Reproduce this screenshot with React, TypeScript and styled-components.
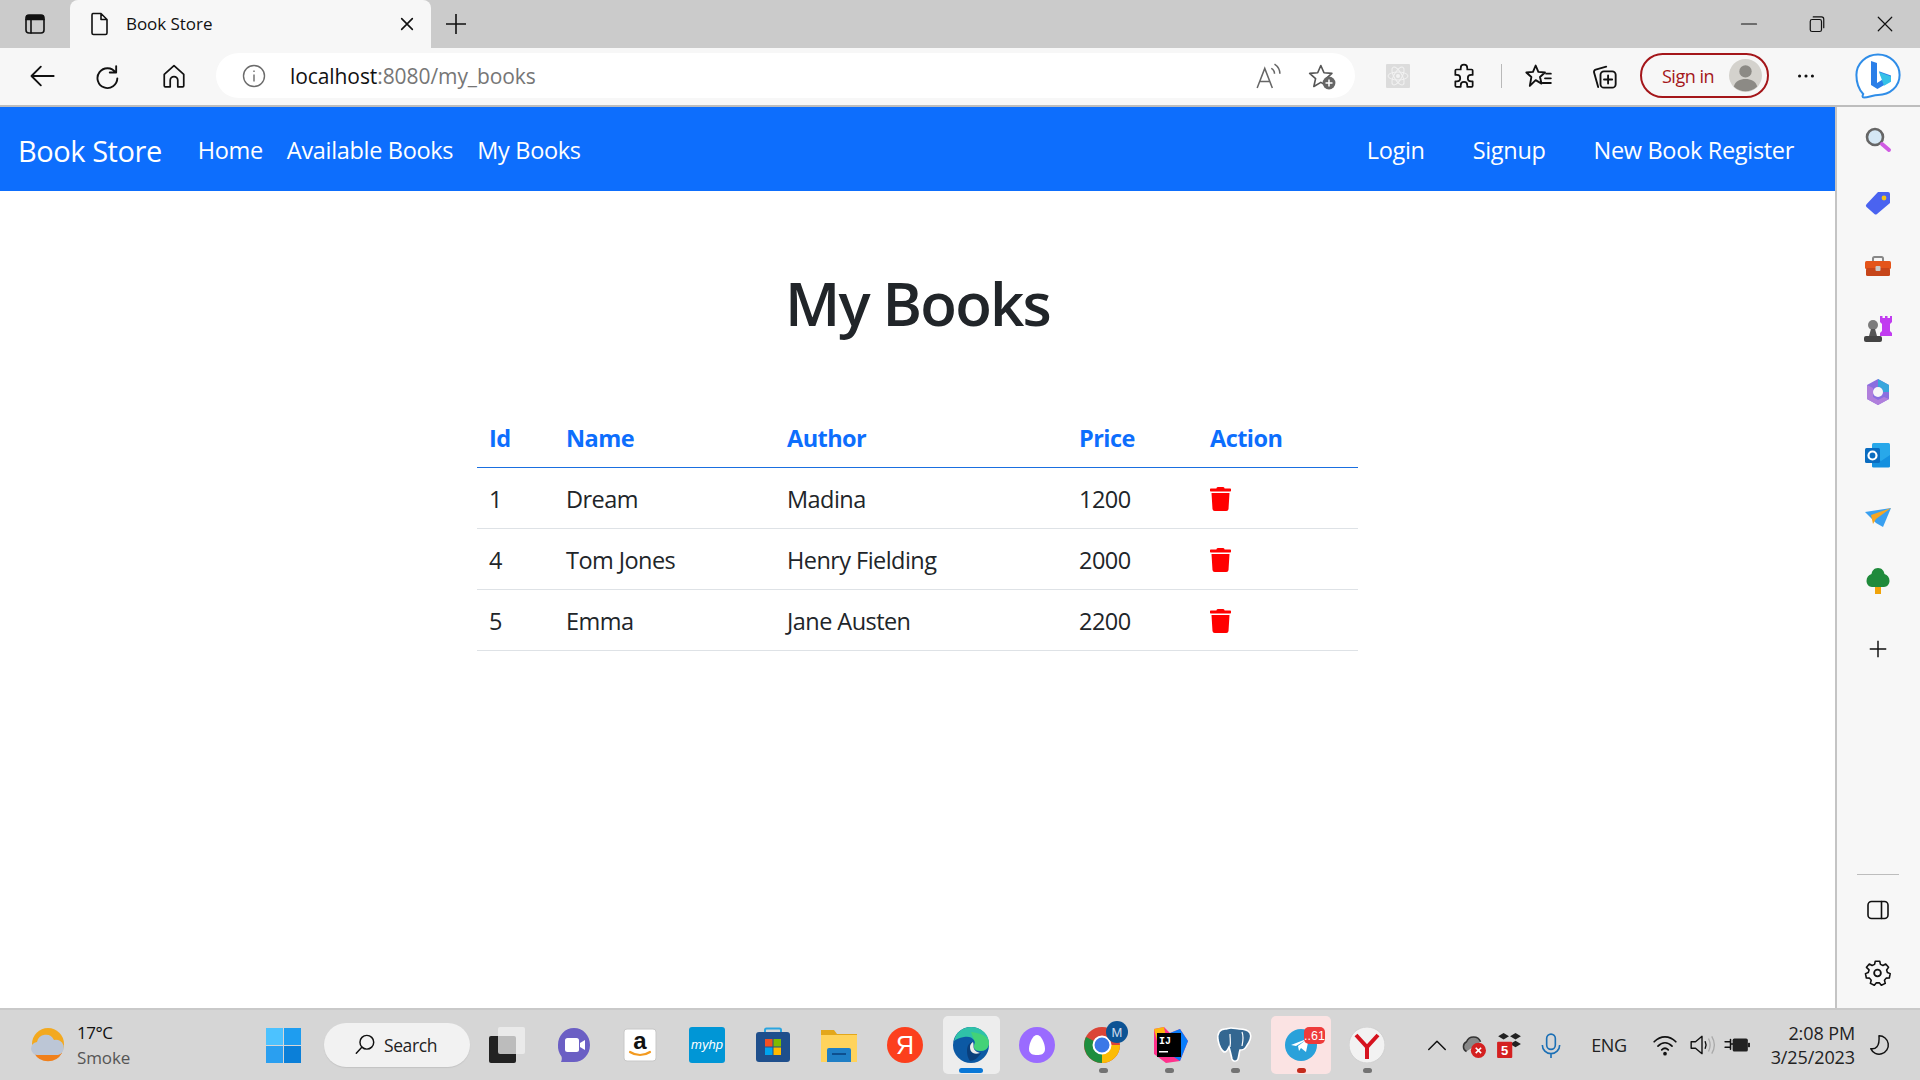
import React from 'react';
import styled, { createGlobalStyle } from 'styled-components';
import { FaTrash } from 'react-icons/fa';

const SANS = `'Open Sans', 'Noto Sans', 'Liberation Sans', sans-serif`;

const GlobalStyle = createGlobalStyle`
  html, body {
    margin: 0;
    padding: 0;
    background: #fff;
  }
  body {
    font-family: ${SANS};
    color: #212529;
    overflow: hidden;
  }
  * {
    box-sizing: border-box;
  }
`;

const Screen = styled.div`
  width: 1920px;
  height: 1080px;
  display: flex;
  flex-direction: column;
  overflow: hidden;
`;

/* tab strip */
const TabStrip = styled.div`
  height: 48px;
  padding-right: 1px;
  display: flex;
  align-items: stretch;
  background: #cbcbcb;
`;
const Slot = styled.div<{ $w: number }>`
  width: ${p => p.$w}px;
  flex: none;
  display: flex;
  align-items: center;
  justify-content: center;
`;
const Tab = styled.div`
  width: 361px;
  display: flex;
  align-items: center;
  padding-left: 20px;
  border-radius: 8px 8px 0 0;
  background: #f7f7f7;
`;
const TabTitle = styled.span`
  margin-left: 16px;
  padding-bottom: 2px;
  flex: 1;
  font-size: 17px;
  letter-spacing: -0.05px;
  color: #111;
`;
const TabClose = styled.div`
  width: 48px;
  display: flex;
  justify-content: center;
`;
const Spacer = styled.div`
  flex: 1;
`;

/* toolbar */
const Toolbar = styled.div`
  height: 59px;
  padding: 6px 0 8px 9px;
  display: flex;
  align-items: center;
  background: #f7f7f7;
  border-bottom: 2px solid #bdbdbd;
`;
const AddressBar = styled.div`
  width: 1139px;
  height: 45px;
  margin: 0 10px 0 9px;
  padding: 0 19px 0 26px;
  display: flex;
  align-items: center;
  flex: none;
  border-radius: 23px;
  background: #fff;
`;
const Url = styled.div`
  margin-left: 24px;
  flex: 1;
  font-size: 21px;
  letter-spacing: -0.08px;
  color: #767676;
  b {
    font-weight: 400;
    color: #111;
  }
`;
const AddressIcons = styled.div`
  display: flex;
  align-items: center;
  gap: 27px;
`;
const Separator = styled.div`
  width: 1px;
  height: 24px;
  margin: 0 3px 0 4px;
  background: #b9b9b9;
`;
const SignIn = styled.div`
  width: 129px;
  height: 45px;
  margin-left: 3px;
  padding: 0 5px 0 20px;
  display: flex;
  align-items: center;
  justify-content: space-between;
  flex: none;
  border: 2px solid #a4161a;
  border-radius: 23px;
  font-size: 18px;
  letter-spacing: -0.5px;
  color: #a4161a;
`;

/* page + sidebar */
const Body = styled.div`
  flex: 1;
  min-height: 0;
  display: flex;
`;
const Page = styled.div`
  flex: 1;
  min-width: 0;
  background: #fff;
`;
const Navbar = styled.nav`
  height: 84px;
  padding: 2px 34px 0 18px;
  display: flex;
  align-items: center;
  background: #0d6efd;
  color: #fff;
`;
const Brand = styled.a`
  margin-right: 36px;
  font-size: 29px;
  letter-spacing: -0.45px;
`;
const NavLink = styled.a<{ $gap: number }>`
  margin-right: ${p => p.$gap}px;
  font-size: 23.5px;
  letter-spacing: -0.32px;
  white-space: nowrap;
`;
const Content = styled.main`
  padding-top: 68px;
  display: flex;
  flex-direction: column;
  align-items: center;
`;
const Title = styled.h1`
  margin: 0 0 62px;
  font-size: 60px;
  line-height: 88px;
  font-weight: 600;
  letter-spacing: -1.8px;
  color: #212529;
`;
const Table = styled.table`
  width: 881px;
  table-layout: fixed;
  border-collapse: collapse;
  font-size: 23.5px;
  letter-spacing: -0.55px;
`;
const Th = styled.th<{ $w: number }>`
  width: ${p => p.$w}px;
  height: 58px;
  padding: 0 12px;
  text-align: left;
  font-weight: 700;
  color: #0d6efd;
  border-bottom: 1px solid #1a6fe0;
`;
const Td = styled.td`
  height: 61px;
  padding: 2px 12px 0;
  border-bottom: 1px solid #dee2e6;
  color: #212529;
`;
const Trash = styled(FaTrash)`
  display: block;
  width: 21px;
  height: 24px;
  color: #ff0000;
`;

const Sidebar = styled.aside`
  width: 85px;
  flex: none;
  padding: 1px 2px 4px 0;
  display: flex;
  flex-direction: column;
  align-items: center;
  background: #f7f7f7;
  border-left: 2px solid #c4c4c4;
`;
const SideItem = styled.div<{ $pad?: number }>`
  width: 100%;
  height: ${p => 63 + (p.$pad ?? 0)}px;
  padding-top: ${p => p.$pad ?? 0}px;
  display: flex;
  align-items: center;
  justify-content: center;
`;
const SideRule = styled.div`
  width: 42px;
  height: 1px;
  margin-bottom: 3px;
  background: #bdbdbd;
`;

/* taskbar */
const Taskbar = styled.footer`
  height: 72px;
  display: flex;
  align-items: center;
  background: #d6d6d6;
  border-top: 2px solid #c9c9c9;
`;
const Weather = styled.div`
  width: 250px;
  padding-left: 30px;
  display: flex;
  align-items: center;
  gap: 11px;
  flex: none;
`;
const WeatherText = styled.div`
  font-size: 17px;
  line-height: 25px;
  letter-spacing: -0.5px;
  color: #111;
  small {
    display: block;
    font-size: 17px;
    letter-spacing: -0.1px;
    color: #555;
  }
`;
const SearchPill = styled.div`
  width: 146px;
  height: 44px;
  margin: 0 2px 0 8px;
  padding-left: 30px;
  display: flex;
  align-items: center;
  gap: 8px;
  flex: none;
  border-radius: 22px;
  background: #f2f2f2;
  box-shadow: 0 1px 1px #c4c4c4;
  font-size: 17.5px;
  letter-spacing: -0.4px;
  color: #222;
`;
const TaskSlot = styled.div<{ $w?: number; $m?: number; $bg?: string; $dot?: string; $wide?: boolean }>`
  position: relative;
  width: ${p => p.$w ?? 66}px;
  height: 58px;
  margin: 0 ${p => p.$m ?? 0}px;
  flex: none;
  display: flex;
  align-items: center;
  justify-content: center;
  border-radius: 5px;
  background: ${p => p.$bg ?? 'transparent'};
  &::after {
    content: '';
    display: ${p => (p.$dot ? 'block' : 'none')};
    position: absolute;
    left: 50%;
    bottom: 1px;
    width: ${p => (p.$wide ? 24 : 9)}px;
    height: 5px;
    margin-left: ${p => (p.$wide ? -12 : -4.5)}px;
    border-radius: 3px;
    background: ${p => p.$dot};
  }
`;
const Tray = styled.div`
  margin-left: 19px;
  flex: 1;
  display: flex;
  align-items: center;
`;
const TraySlot = styled.div<{ $w: number }>`
  width: ${p => p.$w}px;
  flex: none;
  display: flex;
  align-items: center;
  justify-content: center;
`;
const Lang = styled.div`
  width: 60px;
  margin: 0 7px 0 4px;
  font-size: 18px;
  text-align: center;
  letter-spacing: -0.3px;
  color: #222;
`;
const Clock = styled.div`
  width: 91px;
  margin-left: 10px;
  flex: none;
  text-align: right;
  font-size: 18px;
  line-height: 24px;
  letter-spacing: -0.1px;
  color: #222;
`;

const ink = { fill: 'none', stroke: '#111', strokeWidth: 1.6, strokeLinecap: 'round', strokeLinejoin: 'round' } as const;

type SvgProps = { s?: number; h?: number; vb?: string; children: React.ReactNode };

// toolbar glyphs are drawn on a 24 grid
const Svg = ({ s = 24, h, vb = '0 0 24 24', children }: SvgProps) => (
  <svg width={s} height={h ?? s} viewBox={vb} style={{ display: 'block', flex: 'none' }}>
    {children}
  </svg>
);
// app icons are drawn 1:1
const Ico = ({ s = 36, children }: SvgProps) => (
  <Svg s={s} vb={`0 0 ${s} ${s}`}>
    {children}
  </Svg>
);

const rows = [
  { id: 1, name: 'Dream', author: 'Madina', price: 1200 },
  { id: 4, name: 'Tom Jones', author: 'Henry Fielding', price: 2000 },
  { id: 5, name: 'Emma', author: 'Jane Austen', price: 2200 },
];

const sideIcons: React.ReactNode[] = [
  <Ico key="search" s={28}>
    <circle cx="11" cy="11" r="8" fill="#d5e8f5" stroke="#666" strokeWidth="2.6" />
    <path d="M18 18l7 6" stroke="#d05ce3" strokeWidth="4" strokeLinecap="round" />
  </Ico>,
  <Ico key="tag" s={28}>
    <path d="M14 3h10a2 2 0 0 1 2 2v9L13 25a2 2 0 0 1-2.600 0L2.500 18a2 2 0 0 1 0-2.800z" fill="#4a63f0" />
    <circle cx="20" cy="9" r="2.400" fill="#f5c518" />
  </Ico>,
  <Ico key="box" s={28}>
    <g transform="translate(0 1)">
      <path d="M9 8V5.500A1.500 1.500 0 0 1 10.500 4h7A1.500 1.500 0 0 1 19 5.500V8" fill="none" stroke="#888" strokeWidth="2" />
      <rect x="1" y="8" width="26" height="8" rx="1.500" fill="#e4541a" />
      <rect x="2" y="15" width="24" height="8" rx="1.500" fill="#c6451a" />
      <rect x="11.500" y="13" width="5" height="5" rx="1" fill="#c9c9c9" />
    </g>
  </Ico>,
  <Ico key="chess" s={30}>
    <circle cx="10" cy="11" r="5" fill="#7c7c7c" />
    <path d="M8 15h4l2 7H6z" fill="#555" />
    <rect x="1" y="22" width="18" height="6" rx="2" fill="#444" />
    <path d="M17 2h2.500v2H22V2h2.500v2H27V2h2v6l-2 2v7l2 2v3H17v-3l2-2v-7l-2-2z" fill="#c13cf0" />
  </Ico>,
  <Ico key="m365" s={28}>
    <path d="M14 1l11 6v14l-11 6L3 21V7z" fill="#8a6fe0" />
    <path d="M14 1l11 6v7h-6a5 5 0 0 0-5-5z" fill="#38a6dc" />
    <path d="M3 7l6 3v9l5 3 6-3 5 2-11 6-11-6z" fill="#b07fdc" />
    <circle cx="14" cy="14" r="5" fill="#f7f7f7" />
  </Ico>,
  <Ico key="outlook" s={28}>
    <rect x="8" y="2" width="18" height="24" rx="1.500" fill="#28a8ea" />
    <path d="M8 14l9 6 9-6v11a1.500 1.500 0 0 1-1.500 1.500h-15A1.500 1.500 0 0 1 8 25z" fill="#1490df" />
    <rect x="1" y="7" width="15" height="15" rx="1.500" fill="#0a6cc0" />
    <circle cx="8.500" cy="14.500" r="4" fill="none" stroke="#fff" strokeWidth="2.200" />
  </Ico>,
  <Ico key="send" s={28}>
    <path d="M1 8L27 4 19 23l-7-4z" fill="#3aa0f0" />
    <path d="M27 4L7 11l2 9 3-5z" fill="#f5a623" />
  </Ico>,
  <Ico key="tree" s={28}>
    <path d="M14 1c4 0 6 3 6.500 6 3 1 5 3.500 5 7 0 3-2.500 6-5.500 6H8c-3 0-5.500-3-5.500-6 0-3.500 2-6 5-7C8 4 10 1 14 1z" fill="#1f8a3b" />
    <rect x="11" y="20" width="6" height="7" fill="#f0a30a" />
  </Ico>,
];

export default function App() {
  return (
    <Screen>
      <GlobalStyle />
      <TabStrip>
        <Slot $w={70}>
          <Svg>
            <rect x="3" y="3" width="18" height="18" rx="3" {...ink} />
            <path d="M3 7.500h18M8 7.500V21" {...ink} />
            <rect x="3" y="3" width="18" height="5" rx="2" fill="#111" />
          </Svg>
        </Slot>
        <Tab>
          <Svg s={20} h={24} vb="0 0 20 24">
            <path d="M3 1.500h8l6 6V21a1.500 1.500 0 0 1-1.500 1.500h-12A1.500 1.500 0 0 1 2 21V3a1.500 1.500 0 0 1 1-1.500zM11 1.500v6h6" {...ink} />
          </Svg>
          <TabTitle>Book Store</TabTitle>
          <TabClose>
            <Svg s={16}>
              <path d="M4 4l16 16M20 4L4 20" {...ink} strokeWidth="2.400" />
            </Svg>
          </TabClose>
        </Tab>
        <Slot $w={50}>
          <Svg>
            <path d="M12 2v20M2 12h20" {...ink} strokeLinecap="butt" />
          </Svg>
        </Slot>
        <Spacer />
        <Slot $w={68}>
          <Svg s={18}>
            <path d="M2 12h20" {...ink} />
          </Svg>
        </Slot>
        <Slot $w={68}>
          <Svg s={18}>
            <rect x="3" y="6" width="15" height="16" rx="2.500" {...ink} />
            <path d="M7 2.500h11a3 3 0 0 1 3 3V17" {...ink} />
          </Svg>
        </Slot>
        <Slot $w={68}>
          <Svg s={18}>
            <path d="M3 3l18 18M21 3L3 21" {...ink} />
          </Svg>
        </Slot>
      </TabStrip>

      <Toolbar>
        <Slot $w={66}>
          <Svg s={28}>
            <path d="M22 12H3M11 4l-8 8 8 8" {...ink} />
          </Svg>
        </Slot>
        <Slot $w={66}>
          <Svg s={28}>
            <path d="M19 3.500v5.500h-5.500M18.500 9A8.500 8.500 0 1 0 20 14" {...ink} />
          </Svg>
        </Slot>
        <Slot $w={66}>
          <Svg s={26}>
            <path d="M12 2.500L3 10.500V21a1 1 0 0 0 1 1h4.500v-6a3.500 3.500 0 0 1 7 0v6H20a1 1 0 0 0 1-1V10.500z" {...ink} />
          </Svg>
        </Slot>
        <AddressBar>
          <Svg>
            <circle cx="12" cy="12" r="10.500" fill="none" stroke="#6b6b6b" strokeWidth="1.400" />
            <path d="M12 10.500v7M12 6.500V8" fill="none" stroke="#6b6b6b" strokeWidth="1.400" />
          </Svg>
          <Url>
            <b>localhost</b>:8080/my_books
          </Url>
          <AddressIcons>
            <Svg s={26}>
              <path d="M2 23L9 5l7 18M4.500 17h9" fill="none" stroke="#666" strokeWidth="1.400" />
              <path d="M15 5c2 1 3 3 3 5M18 1c3 2 5 5 5 9" fill="none" stroke="#666" strokeWidth="1.400" />
            </Svg>
            <Svg s={28}>
              <path d="M11 3l2.700 6.200 6.800.6-5.100 4.500 1.500 6.600L11 17.500 5 21l1.500-6.700L1.400 9.800l6.900-.6z" fill="none" stroke="#555" strokeWidth="1.400" strokeLinejoin="round" />
              <circle cx="18" cy="18" r="5.500" fill="#666" />
              <path d="M18 15v6M15 18h6" stroke="#fff" strokeWidth="1.300" />
            </Svg>
          </AddressIcons>
        </AddressBar>
        <Slot $w={66}>
          <Svg>
            <rect width="24" height="24" rx="1" fill="#dcdcdc" />
            <g fill="none" stroke="#f2f2f2" strokeWidth="1">
              <ellipse cx="12" cy="12" rx="10" ry="4" />
              <ellipse cx="12" cy="12" rx="10" ry="4" transform="rotate(60 12 12)" />
              <ellipse cx="12" cy="12" rx="10" ry="4" transform="rotate(120 12 12)" />
            </g>
            <circle cx="12" cy="12" r="2" fill="#f2f2f2" />
          </Svg>
        </Slot>
        <Slot $w={66}>
          <Svg s={26}>
            <path d="M9 4.500a3 3 0 0 1 6 0V6h4a1 1 0 0 1 1 1v4h-1.500a3 3 0 0 0 0 6H20v4a1 1 0 0 1-1 1h-4v-1.500a3 3 0 0 0-6 0V22H5a1 1 0 0 1-1-1v-4h1.500a3 3 0 0 0 0-6H4V7a1 1 0 0 1 1-1h4z" {...ink} />
          </Svg>
        </Slot>
        <Separator />
        <Slot $w={66}>
          <Svg s={28}>
            <path d="M10 3l2.300 5.500 5.700.5-4.300 3.900 1.300 5.600L10 15.500 5 20.500l1.300-7.600L2 9l5.700-.5z" {...ink} />
            <path d="M19 10h4M18 14h5M16 18h7" {...ink} />
          </Svg>
        </Slot>
        <Slot $w={66}>
          <Svg s={28}>
            <path d="M7 21.500L3.500 9a2 2 0 0 1 1.400-2.500l9-2.500" {...ink} />
            <rect x="9" y="8" width="13" height="14" rx="3" {...ink} />
            <path d="M15.500 11.500v7M12 15h7" {...ink} />
          </Svg>
        </Slot>
        <SignIn>
          Sign in
          <Svg s={33}>
            <circle cx="12" cy="12" r="12" fill="#d4d2cd" />
            <circle cx="12" cy="9" r="4.500" fill="#8c8a85" />
            <path d="M3.500 20c1-4 4.500-5.500 8.500-5.500s7.500 1.500 8.500 5.500a12 12 0 0 1-17 0z" fill="#8c8a85" />
          </Svg>
        </SignIn>
        <Slot $w={74}>
          <Svg s={22}>
            <circle cx="5" cy="12" r="1.700" fill="#111" />
            <circle cx="12" cy="12" r="1.700" fill="#111" />
            <circle cx="19" cy="12" r="1.700" fill="#111" />
          </Svg>
        </Slot>
        <Slot $w={70}>
          <Svg s={48}>
            <path d="M12 1.200c6 0 10.800 4.600 10.800 10.300S18 21.500 12 21.500c-2 0-5 1.300-7 1.300-1 0-.8-.9-.4-1.800C2.700 19 1.200 15.500 1.200 11.500 1.200 5.800 6 1.200 12 1.200z" fill="#fff" stroke="#2f8de8" strokeWidth="1" />
            <path d="M8.500 4.500l3 1v10l4-2.500-2-.9-1-2.500 6 2.200v2.700l-6.800 4-3.200-2z" fill="#2b7fe8" />
            <path d="M12.500 10l6 2.200v2.700l-3.500 2z" fill="#35c1e8" />
          </Svg>
        </Slot>
      </Toolbar>

      <Body>
        <Page>
          <Navbar>
            <Brand>Book Store</Brand>
            <NavLink $gap={24}>Home</NavLink>
            <NavLink $gap={24}>Available Books</NavLink>
            <NavLink $gap={0}>My Books</NavLink>
            <Spacer />
            <NavLink $gap={48}>Login</NavLink>
            <NavLink $gap={48}>Signup</NavLink>
            <NavLink $gap={7}>New Book Register</NavLink>
          </Navbar>
          <Content>
            <Title>My Books</Title>
            <Table>
              <thead>
                <tr>
                  <Th $w={77}>Id</Th>
                  <Th $w={221}>Name</Th>
                  <Th $w={292}>Author</Th>
                  <Th $w={131}>Price</Th>
                  <Th $w={160}>Action</Th>
                </tr>
              </thead>
              <tbody>
                {rows.map(row => (
                  <tr key={row.id}>
                    <Td>{row.id}</Td>
                    <Td>{row.name}</Td>
                    <Td>{row.author}</Td>
                    <Td>{row.price}</Td>
                    <Td>
                      <Trash />
                    </Td>
                  </tr>
                ))}
              </tbody>
            </Table>
          </Content>
        </Page>
        <Sidebar>
          {sideIcons.map((icon, i) => (
            <SideItem key={i}>{icon}</SideItem>
          ))}
          <SideItem $pad={5}>
            <Svg s={22}>
              <path d="M12 3v18M3 12h18" {...ink} strokeLinecap="butt" />
            </Svg>
          </SideItem>
          <Spacer />
          <SideRule />
          <SideItem>
            <Svg>
              <rect x="2" y="3.500" width="20" height="17" rx="3.500" {...ink} />
              <path d="M15.500 3.500v17" {...ink} />
            </Svg>
          </SideItem>
          <SideItem>
            <Svg s={27}>
              <path d="M10 2h4l.6 2.800 2.200 1 2.500-1.400 2.500 3-1.700 2.300.7 2.300 2.500 1-.8 3.900-2.800.1-1.500 1.900.7 2.800-3.500 1.700-1.800-2.200h-2.600l-1.800 2.200-3.500-1.700.7-2.800-1.500-1.900-2.800-.1-.8-3.900 2.500-1 .7-2.300L2.200 7.400l2.500-3 2.500 1.400 2.200-1z" {...ink} strokeWidth="1.400" />
              <circle cx="12" cy="12.500" r="3" {...ink} />
            </Svg>
          </SideItem>
        </Sidebar>
      </Body>

      <Taskbar>
        <Weather>
          <Ico>
            <circle cx="18" cy="17" r="16" fill="#f3a91f" />
            <path d="M4 26h28a16 16 0 0 1-28 0z" fill="#f0801c" />
            <path d="M8 28a6.500 6.500 0 0 1-1-13 9 9 0 0 1 17-2 7.500 7.500 0 0 1 4 15z" fill="#bcc6d6" />
            <path d="M7 15a9 9 0 0 1 17-2 9 9 0 0 0-17 2z" fill="#e6ebf2" />
          </Ico>
          <WeatherText>
            17°C
            <small>Smoke</small>
          </WeatherText>
        </Weather>
        <TaskSlot>
          <Ico s={35}>
            <rect x="0" y="0" width="17" height="17" fill="#4cc2ff" />
            <rect x="18" y="0" width="17" height="17" fill="#1e9df0" />
            <rect x="0" y="18" width="17" height="17" fill="#2a9ff0" />
            <rect x="18" y="18" width="17" height="17" fill="#0b7fd8" />
          </Ico>
        </TaskSlot>
        <SearchPill>
          <Svg s={22}>
            <circle cx="14" cy="9" r="7.500" {...ink} />
            <path d="M8.500 14.500L2.500 21" {...ink} />
          </Svg>
          Search
        </SearchPill>
        <TaskSlot $w={70}>
          <Ico>
            <rect x="0" y="9" width="27" height="27" rx="2" fill="#222" />
            <rect x="9" y="0" width="27" height="27" rx="2" fill="#f0f0f0" opacity=".75" />
          </Ico>
        </TaskSlot>
        <TaskSlot $w={64}>
          <Ico>
            <path d="M18 1c9 0 16 7.500 16 17s-7 17-16 17H5c1-2 1-4 .5-5.500A17 17 0 0 1 2 18C2 8.500 9 1 18 1z" fill="#6b5fc4" />
            <rect x="9" y="11" width="14" height="14" rx="2.500" fill="#fff" />
            <path d="M24 16l5-3v10l-5-3z" fill="#fff" />
          </Ico>
        </TaskSlot>
        <TaskSlot $w={68}>
          <Ico s={34}>
            <rect x="1" y="1" width="32" height="32" rx="3" fill="#fff" stroke="#c8c8c8" />
            <text x="17" y="21" textAnchor="middle" fontSize="24" fontWeight="700" fontFamily="Liberation Sans, sans-serif" fill="#111">a</text>
            <path d="M7 24c6 4 14 4 20 0" fill="none" stroke="#f39a1f" strokeWidth="2.200" strokeLinecap="round" />
          </Ico>
        </TaskSlot>
        <TaskSlot>
          <Ico>
            <rect width="36" height="36" rx="3" fill="#0096d6" />
            <text x="18" y="22" textAnchor="middle" fontSize="13" fontStyle="italic" fontFamily="Liberation Sans, sans-serif" fill="#fff">myhp</text>
          </Ico>
        </TaskSlot>
        <TaskSlot>
          <Ico>
            <path d="M10 5V3a1.500 1.500 0 0 1 1.500-1.500h13A1.500 1.500 0 0 1 26 3v2" fill="none" stroke="#2aa5e0" strokeWidth="2" />
            <rect x="1" y="5" width="34" height="30" rx="3" fill="#1f4f8c" />
            <rect x="10" y="12" width="7.500" height="7.500" fill="#f25022" />
            <rect x="18.500" y="12" width="7.500" height="7.500" fill="#7fba00" />
            <rect x="10" y="20.500" width="7.500" height="7.500" fill="#00a4ef" />
            <rect x="18.500" y="20.500" width="7.500" height="7.500" fill="#ffb900" />
          </Ico>
        </TaskSlot>
        <TaskSlot>
          <Ico>
            <path d="M0 3h13l3 4h20v28H0z" fill="#e3a71b" />
            <rect x="0" y="8" width="36" height="27" fill="#ffd35c" />
            <path d="M6 35V23a2 2 0 0 1 2-2h20a2 2 0 0 1 2 2v12z" fill="#1f7fc6" />
            <rect x="11" y="26" width="14" height="2" fill="#0d4f8f" />
          </Ico>
        </TaskSlot>
        <TaskSlot>
          <Ico>
            <circle cx="18" cy="18" r="18" fill="#fc3f1d" />
            <text x="18" y="27" textAnchor="middle" fontSize="25" fontFamily="Liberation Sans, sans-serif" fill="#fff">Я</text>
          </Ico>
        </TaskSlot>
        <TaskSlot $w={57} $m={4.5} $bg="#ededed" $dot="#0a78d7" $wide>
          <Ico>
            <circle cx="18" cy="18" r="18" fill="#0c59a4" />
            <path d="M1 14C3 5 10 0 18 0c10 0 18 7 18 16 0 5-4 8-8 8-3 0-7-1-7-4 0-3 2-4 0-7-2-3-6-4-10-3-5 1-8 2-10 4z" fill="#2fc2a8" />
            <path d="M18 5c9 1 18 4 18 11 0 5-4 8-8 8-3 0-7-1-7-4 0-3 2-4 0-7-1-3-2-5-3-8z" fill="#4cd964" opacity=".7" />
            <path d="M14 24c0-5 2-8 5-9 2 2 1 5 2 7 1 3 4 4 7 4-3 5-7 8-11 8-2-3-3-6-3-10z" fill="#0a3f7c" />
            <path d="M17 20c0-2 1-4 3-5 1 2 0 5 1 7 1 2 3 3 6 4-3 1-5 1-7 0-2-1-3-3-3-6z" fill="#ededed" />
          </Ico>
        </TaskSlot>
        <TaskSlot>
          <Ico>
            <circle cx="18" cy="18" r="18" fill="#9a6bff" />
            <path d="M18 8c4 0 8 8 8 14 0 5-4 6-8 6s-8-1-8-6c0-6 4-14 8-14z" fill="#fff" />
          </Ico>
        </TaskSlot>
        <TaskSlot $dot="#737373">
          <Ico s={50}>
            <circle cx="24" cy="25" r="18" fill="#db4437" />
            <path d="M24 25h18A18 18 0 0 1 24 43z" fill="#fbbc05" />
            <path d="M24 25v18A18 18 0 0 1 8 17z" fill="#1e8e3e" />
            <circle cx="24" cy="25" r="8.500" fill="#3b78e7" stroke="#fff" strokeWidth="2" />
            <circle cx="39" cy="12" r="11" fill="#0c5394" />
            <text x="39" y="17" textAnchor="middle" fontSize="13" fontFamily="Liberation Sans, sans-serif" fill="#cde">M</text>
          </Ico>
        </TaskSlot>
        <TaskSlot $dot="#737373">
          <Ico s={38}>
            <path d="M4 3l10-2 6 6 10-4 8 12-8 20-14 2L4 28z" fill="#ff318c" />
            <path d="M20 7l10-4 8 12-8 20-6-4z" fill="#087cfa" />
            <path d="M4 3l10-2 2 10-8 8z" fill="#fdb60d" />
            <rect x="7" y="7" width="24" height="24" fill="#000" />
            <text x="9" y="18" fontSize="10" fontWeight="700" fontFamily="Liberation Mono, monospace" fill="#fff">IJ</text>
            <rect x="9" y="25" width="9" height="1.500" fill="#fff" />
          </Ico>
        </TaskSlot>
        <TaskSlot $dot="#737373">
          <Ico s={38}>
            <path d="M9 3c-5 0-8 4-7 11 1 6 4 12 7 12 2 0 3-3 4-5 1 3 2 8 3 12 1 3 5 3 6 0 1-3 1-6 2-9 3 0 5-1 6-3 3-4 6-10 4-14-2-3-7-4-11-4-2 0-5-1-8-1-2 0-4 1-6 1z" fill="#336791" stroke="#fff" strokeWidth="1.600" />
            <path d="M14 8c0 5 1 8 0 13M26 6c2 5 1 9 0 14" fill="none" stroke="#fff" strokeWidth="1.200" />
          </Ico>
        </TaskSlot>
        <TaskSlot $w={60} $m={3} $bg="#fbe3e3" $dot="#c42b1c">
          <Ico s={48}>
            <circle cx="24" cy="24" r="16" fill="#2aa1da" />
            <path d="M14 24l18-7-3 14-5-4-2 3-1-5 8-6-10 6z" fill="#fff" />
            <rect x="27" y="6" width="21" height="17" rx="5" fill="#ee3b3b" />
            <text x="37.500" y="18.500" textAnchor="middle" fontSize="12.500" fontFamily="Liberation Sans, sans-serif" fill="#fff">..61</text>
          </Ico>
        </TaskSlot>
        <TaskSlot $dot="#737373">
          <Ico>
            <circle cx="18" cy="18" r="18" fill="#f2f2f2" stroke="#d0d0d0" />
            <path d="M7 8l11 12 11-12M18 20v12" fill="none" stroke="#d6121e" strokeWidth="4" />
          </Ico>
        </TaskSlot>
        <Tray>
          <TraySlot $w={36}>
            <Svg s={22}>
              <path d="M3 17l9-9 9 9" {...ink} />
            </Svg>
          </TraySlot>
          <TraySlot $w={36}>
            <Svg s={26}>
              <path d="M6 18a5 5 0 0 1 0-9 7 7 0 0 1 13 0" fill="#888" stroke="#333" strokeWidth="1.400" />
              <circle cx="17" cy="17" r="7" fill="#d42020" />
              <path d="M14.500 14.500l5 5M19.500 14.500l-5 5" stroke="#fff" strokeWidth="1.500" />
            </Svg>
          </TraySlot>
          <TraySlot $w={36}>
            <Svg s={26}>
              <path d="M7 1l5 3-5 3-5-3zM18 1l5 3-5 3-5-3zM18 8l5 3-5 3-5-3z" fill="#222" />
              <rect x="1" y="9" width="14" height="15" rx="1" fill="#d42020" />
              <text x="8" y="21" textAnchor="middle" fontSize="12" fontWeight="700" fontFamily="Liberation Sans, sans-serif" fill="#fff">5</text>
            </Svg>
          </TraySlot>
          <TraySlot $w={48}>
            <Svg s={26}>
              <rect x="8" y="2" width="8" height="14" rx="4" fill="none" stroke="#1a6fb5" strokeWidth="1.500" />
              <path d="M4 12a8 8 0 0 0 16 0M12 20v4" fill="none" stroke="#1a6fb5" strokeWidth="1.500" />
            </Svg>
          </TraySlot>
          <Lang>ENG</Lang>
          <TraySlot $w={38}>
            <Svg s={26}>
              <path d="M2 9c6-6 14-6 20 0M5.500 13c4-4 9-4 13 0M9 16.500c2-2 4-2 6 0" {...ink} />
              <circle cx="12" cy="20" r="1.700" fill="#111" />
            </Svg>
          </TraySlot>
          <TraySlot $w={36}>
            <Svg s={26}>
              <path d="M2 9h4l6-5v16l-6-5H2z" {...ink} strokeWidth="1.300" />
              <path d="M15 9c1 2 1 4 0 6" {...ink} strokeWidth="1.300" />
              <path d="M18 6c2 4 2 8 0 12M21 4c3 5 3 11 0 16" fill="none" stroke="#aaa" strokeWidth="1.200" />
            </Svg>
          </TraySlot>
          <TraySlot $w={34}>
            <Svg s={26}>
              <path d="M1 9h5M1 14h5M6 7v9M6 11h3" {...ink} strokeWidth="1.400" />
              <rect x="8" y="6" width="14" height="12" rx="1.500" fill="#222" />
              <rect x="22" y="10" width="2" height="4" fill="#222" />
            </Svg>
          </TraySlot>
          <Clock>
            2:08 PM
            <br />
            3/25/2023
          </Clock>
          <TraySlot $w={48}>
            <Svg s={22}>
              <path d="M12 2a10 10 0 1 1-9 14c5 1 10-2 9-14z" {...ink} />
            </Svg>
          </TraySlot>
        </Tray>
      </Taskbar>
    </Screen>
  );
}
